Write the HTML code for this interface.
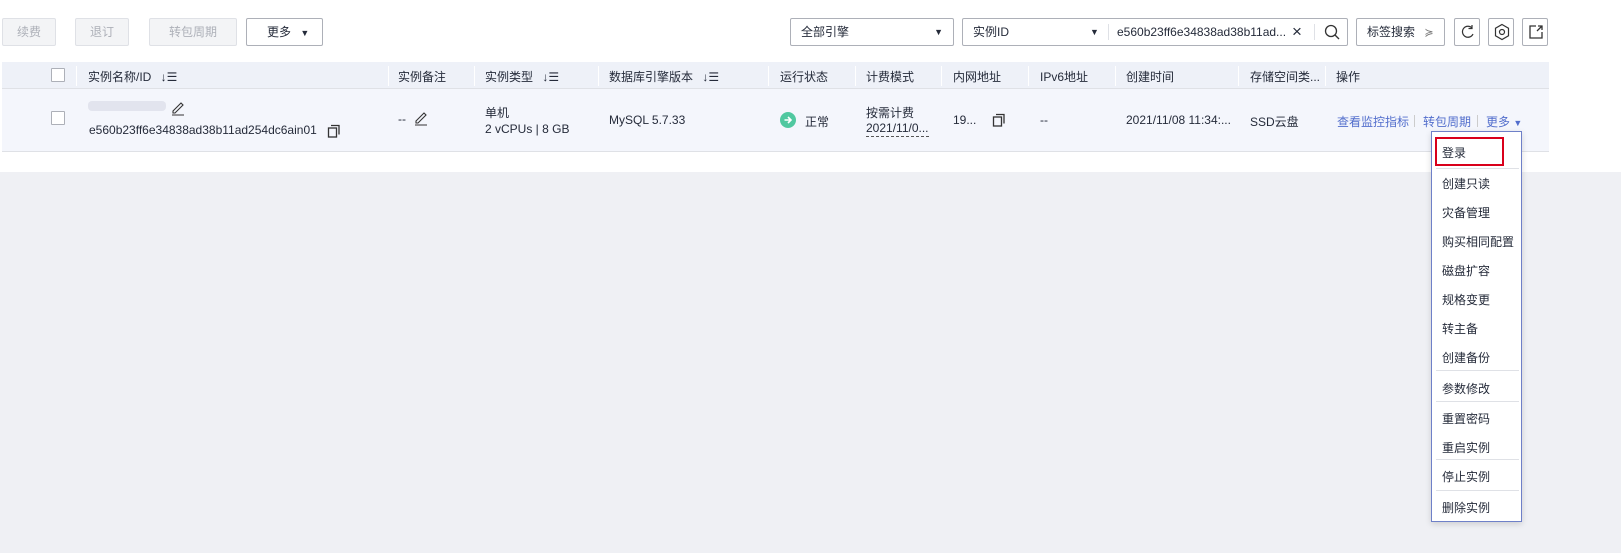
<!DOCTYPE html>
<html><head><meta charset="utf-8"><style>
*{margin:0;padding:0;box-sizing:border-box}
body{width:1621px;height:553px;background:#eff0f4;position:relative;overflow:hidden;font-family:"Liberation Sans","Noto Sans CJK SC",sans-serif;font-size:12px;color:#252b3a}
.a{position:absolute;white-space:nowrap}
.btn{position:absolute;height:28px;border:1px solid #dfe1e6;background:#f3f4f6;color:#adb0b8;text-align:center;line-height:26px;border-radius:2px}
.box{position:absolute;height:28px;border:1px solid #adb0b8;background:#fff;border-radius:2px;line-height:26px;padding-left:10px}
.cb{position:absolute;width:14px;height:14px;border:1px solid #adb0b8;background:#fff;border-radius:1px}
.th{position:absolute;top:68px;color:#252b3a}
.sep{position:absolute;top:66px;width:1px;height:20px;background:#fff}
.menu{position:absolute;left:1431px;top:131px;width:91px;height:391px;border:1px solid #6e80c8;background:#fff;box-shadow:0 2px 6px rgba(0,0,0,.15)}
.mi{position:absolute;left:10px;color:#252b3a}
.ms{position:absolute;left:4px;width:83px;height:1px;background:#dfe1e6}
.lk{color:#526ecc}
</style></head><body>
<div class="a" style="left:0;top:0;width:1621px;height:172px;background:#fff"></div>
<div class="btn" style="left:2px;top:18px;width:54px">续费</div>
<div class="btn" style="left:75px;top:18px;width:54px">退订</div>
<div class="btn" style="left:149px;top:18px;width:88px">转包周期</div>
<div class="box" style="left:246px;top:18px;width:77px;border-color:#adb0b8;color:#252b3a;padding-left:20px">更多 <span style="font-size:9px;margin-left:6px">▼</span></div>

<div class="box" style="left:790px;top:18px;width:164px">全部引擎<span class="a" style="right:10px;top:0;font-size:9px">▼</span></div>
<div class="box" style="left:962px;top:18px;width:386px">实例ID<span class="a" style="left:127px;top:0;font-size:9px">▼</span>
<span class="a" style="left:145px;top:5px;width:1px;height:16px;background:#dfe1e6"></span>
<span class="a" style="left:154px;top:0">e560b23ff6e34838ad38b11ad...</span>
<span class="a" style="left:329px;top:0;font-size:17px">×</span>
<span class="a" style="left:351px;top:5px;width:1px;height:16px;background:#dfe1e6"></span>
<svg class="a" style="left:361px;top:5px" width="16" height="16" viewBox="0 0 16 16"><circle cx="7" cy="7" r="5.5" fill="none" stroke="#333" stroke-width="1.3"/><path d="M11 11l4 4" stroke="#333" stroke-width="1.3"/></svg></div>
<div class="box" style="left:1356px;top:18px;width:89px;color:#252b3a">标签搜索 <span style="margin-left:6px;font-size:11px;color:#777">≽</span></div>
<div class="box" style="left:1454px;top:18px;width:26px;padding:0"><svg style="position:absolute;left:5px;top:5px" width="16" height="16" viewBox="0 0 16 16"><path d="M12 4A5.5 5.5 0 1 0 13 10" fill="none" stroke="#333" stroke-width="1.2"/><path d="M12 1v3.5H8.5" fill="none" stroke="#333" stroke-width="1.2"/></svg></div>
<div class="box" style="left:1488px;top:18px;width:26px;padding:0"><svg style="position:absolute;left:4px;top:4px" width="18" height="18" viewBox="0 0 18 18"><path d="M9 1.5l6.5 3.75v7.5L9 16.5 2.5 12.75v-7.5z" fill="none" stroke="#333" stroke-width="1.2"/><circle cx="9" cy="9" r="2.5" fill="none" stroke="#333" stroke-width="1.2"/></svg></div>
<div class="box" style="left:1522px;top:18px;width:26px;padding:0"><svg style="position:absolute;left:5px;top:5px" width="16" height="16" viewBox="0 0 16 16"><path d="M8 2H2v12h12V8" fill="none" stroke="#333" stroke-width="1.3"/><path d="M10 2h4v4M14 2L9 7" fill="none" stroke="#333" stroke-width="1.3"/></svg></div>

<div class="a" style="left:2px;top:62px;width:1547px;height:27px;background:#eef1f8;border-bottom:1px solid #dfe1e6"></div>
<div class="a" style="left:2px;top:89px;width:1547px;height:63px;background:#f4f6fc;border-bottom:1px solid #dfe1e6"></div>
<div class="sep" style="left:76px"></div><div class="sep" style="left:388px"></div><div class="sep" style="left:474px"></div><div class="sep" style="left:598px"></div><div class="sep" style="left:768px"></div><div class="sep" style="left:855px"></div><div class="sep" style="left:941px"></div><div class="sep" style="left:1028px"></div><div class="sep" style="left:1115px"></div><div class="sep" style="left:1238px"></div><div class="sep" style="left:1325px"></div>
<div class="cb" style="left:51px;top:68px"></div>
<div class="th" style="left:88px">实例名称/ID <span style="margin-left:6px">↓☰</span></div>
<div class="th" style="left:398px">实例备注</div>
<div class="th" style="left:485px">实例类型 <span style="margin-left:6px">↓☰</span></div>
<div class="th" style="left:609px">数据库引擎版本 <span style="margin-left:6px">↓☰</span></div>
<div class="th" style="left:780px">运行状态</div>
<div class="th" style="left:866px">计费模式</div>
<div class="th" style="left:953px">内网地址</div>
<div class="th" style="left:1040px">IPv6地址</div>
<div class="th" style="left:1126px">创建时间</div>
<div class="th" style="left:1250px">存储空间类...</div>
<div class="th" style="left:1336px">操作</div>

<div class="cb" style="left:51px;top:111px"></div>
<div class="a" style="left:88px;top:101px;width:78px;height:10px;background:#dde0ea;border-radius:4px;opacity:.8"></div>
<svg class="a" style="left:170px;top:100px" width="16" height="16" viewBox="0 0 16 16"><path d="M3 11l8-8 2 2-8 8H3z M2 15h12" fill="none" stroke="#333" stroke-width="1.1"/></svg>
<div class="a" style="left:89px;top:123px">e560b23ff6e34838ad38b11ad254dc6ain01</div>
<svg class="a" style="left:327px;top:124px" width="14" height="14" viewBox="0 0 14 14"><rect x="1.5" y="4" width="8" height="9" fill="none" stroke="#333" stroke-width="1.3"/><path d="M4 1.5h8v9" fill="none" stroke="#333" stroke-width="1.3"/></svg>
<div class="a" style="left:398px;top:112px">--</div>
<svg class="a" style="left:413px;top:110px" width="16" height="16" viewBox="0 0 16 16"><path d="M3 11l8-8 2 2-8 8H3z M2 15h12" fill="none" stroke="#333" stroke-width="1.1"/></svg>
<div class="a" style="left:485px;top:104px">单机</div>
<div class="a" style="left:485px;top:122px">2 vCPUs | 8 GB</div>
<div class="a" style="left:609px;top:113px">MySQL 5.7.33</div>
<svg class="a" style="left:780px;top:112px" width="16" height="16" viewBox="0 0 16 16"><circle cx="8" cy="8" r="8" fill="#50c8a0"/><path d="M4.5 8h6.5M8 5l3 3-3 3" fill="none" stroke="#fff" stroke-width="1.6"/></svg>
<div class="a" style="left:805px;top:113px">正常</div>
<div class="a" style="left:866px;top:104px">按需计费</div>
<div class="a" style="left:866px;top:121px;border-bottom:1px dashed #555;padding-bottom:1px">2021/11/0...</div>
<div class="a" style="left:953px;top:113px">19...</div>
<svg class="a" style="left:992px;top:113px" width="14" height="14" viewBox="0 0 14 14"><rect x="1.5" y="4" width="8" height="9" fill="none" stroke="#333" stroke-width="1.3"/><path d="M4 1.5h8v9" fill="none" stroke="#333" stroke-width="1.3"/></svg>
<div class="a" style="left:1040px;top:113px">--</div>
<div class="a" style="left:1126px;top:113px">2021/11/08 11:34:...</div>
<div class="a" style="left:1250px;top:113px">SSD云盘</div>
<div class="a lk" style="left:1337px;top:113px">查看监控指标</div>
<div class="a" style="left:1414px;top:115px;width:1px;height:12px;background:#ccc"></div>
<div class="a lk" style="left:1423px;top:113px">转包周期</div>
<div class="a" style="left:1477px;top:115px;width:1px;height:12px;background:#ccc"></div>
<div class="a lk" style="left:1486px;top:113px">更多 <span style="font-size:9px">▼</span></div>

<div class="menu">
<div class="a" style="left:3px;top:5px;width:69px;height:29px;border:2px solid #d9001b"></div>
<div class="mi" style="top:12px">登录</div>
<div class="ms" style="top:36px"></div>
<div class="mi" style="top:43px">创建只读</div>
<div class="mi" style="top:72px">灾备管理</div>
<div class="mi" style="top:101px">购买相同配置</div>
<div class="mi" style="top:130px">磁盘扩容</div>
<div class="mi" style="top:159px">规格变更</div>
<div class="mi" style="top:188px">转主备</div>
<div class="mi" style="top:217px">创建备份</div>
<div class="ms" style="top:238px"></div>
<div class="mi" style="top:248px">参数修改</div>
<div class="ms" style="top:269px"></div>
<div class="mi" style="top:278px">重置密码</div>
<div class="mi" style="top:307px">重启实例</div>
<div class="ms" style="top:327px"></div>
<div class="mi" style="top:336px">停止实例</div>
<div class="ms" style="top:358px"></div>
<div class="mi" style="top:367px">删除实例</div>
</div>
</body></html>
